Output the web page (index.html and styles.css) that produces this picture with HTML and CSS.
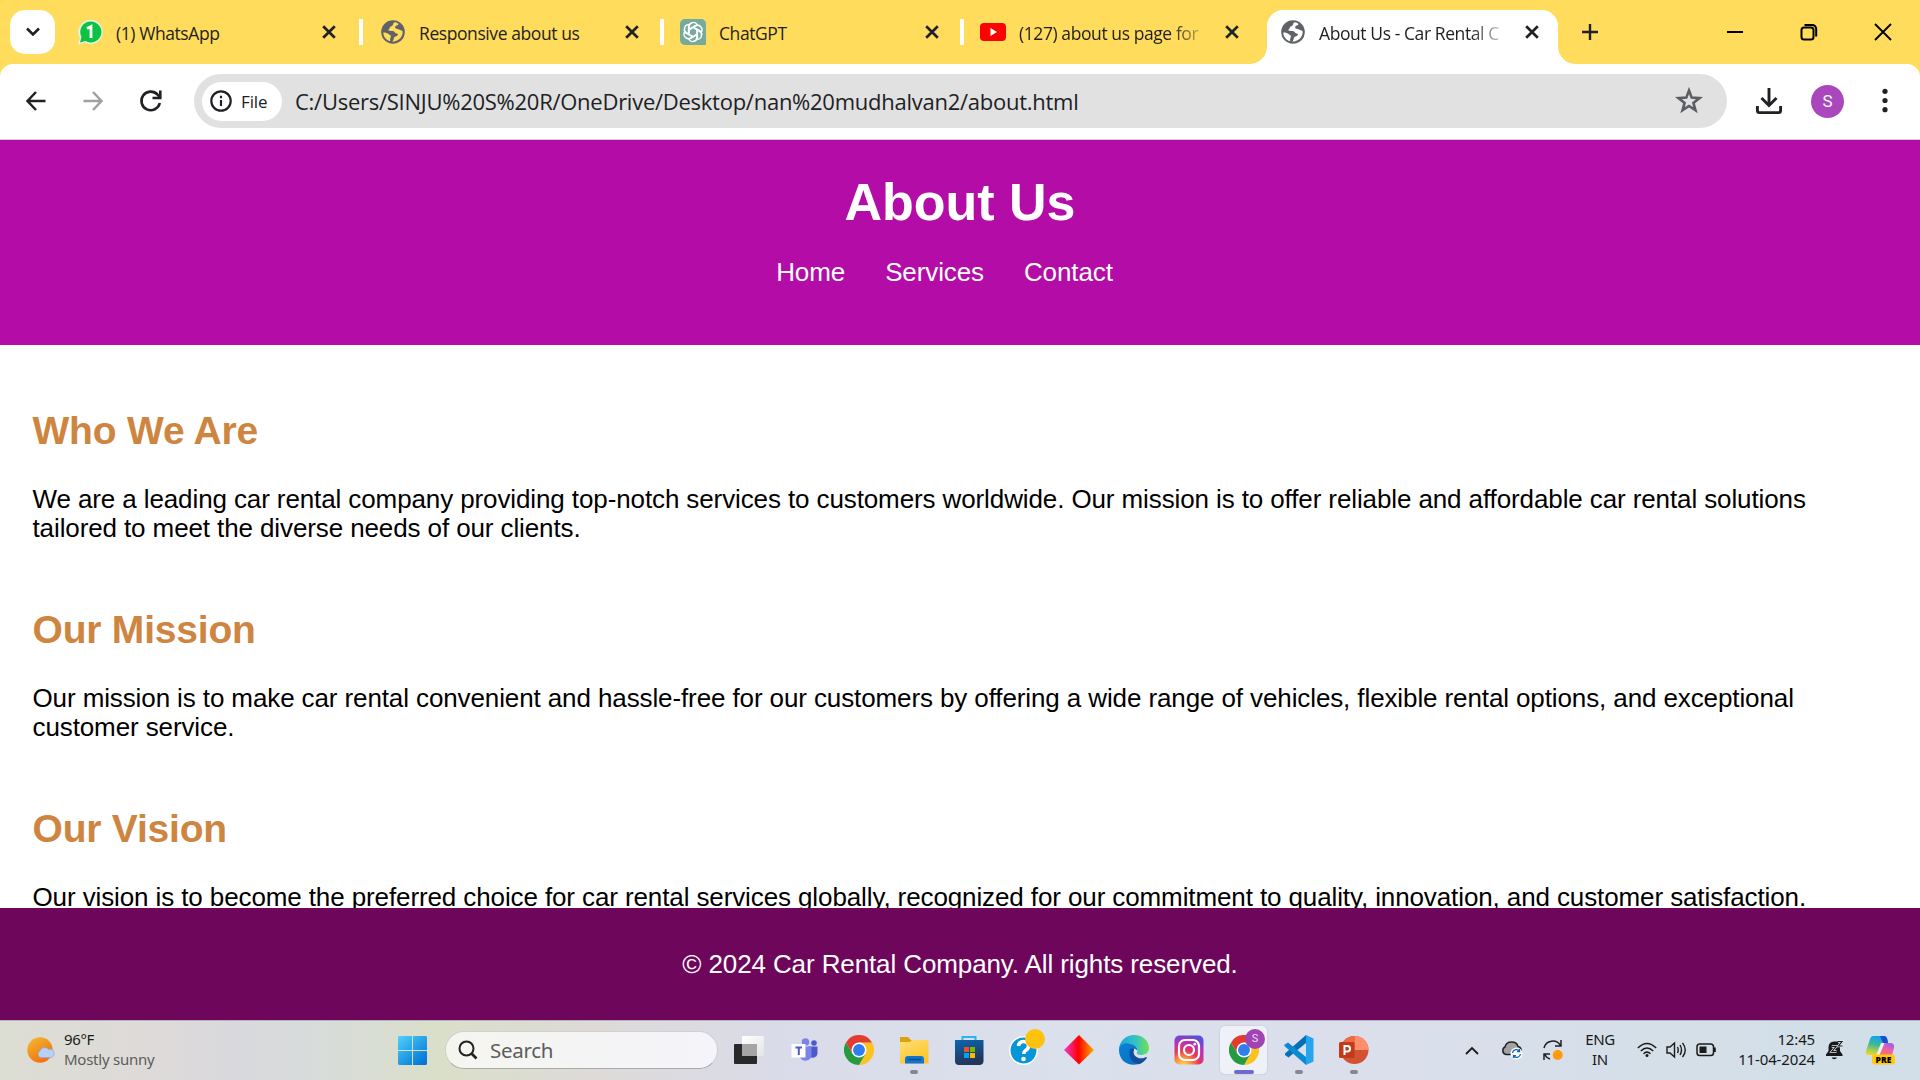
FILE: index.html
```html
<!DOCTYPE html>
<html lang="en">
<head>
<meta charset="utf-8">
<title>About Us - Car Rental Company</title>
<link rel="stylesheet" href="styles.css">
</head>
<body>
<svg class="defs" width="0" height="0" aria-hidden="true">
  <symbol id="close" viewBox="0 0 16 16"><path d="M2.2 2.2l11.6 11.6M13.8 2.2L2.2 13.8" stroke="#202124" stroke-width="2.7" fill="none"/></symbol>
  <symbol id="globe" viewBox="0 0 24 24"><circle cx="12" cy="12" r="11.8" fill="#5f6368"/><path d="M14.500 2.300C11 2.500 13 5.500 10.500 6.200C8 7 9 9 7.500 9.600C6.500 10.200 8.500 11.300 11 11C14 10.700 13.600 13.400 16 13.500C18 13.700 16.500 16.200 14.500 16.500C12 17 13.500 20 11 21.600C17 21.800 21.500 17.500 21.700 12C21.600 10 19.500 10.500 18 9.500C16.500 8.300 14 9.200 14.200 7.200C14.400 5.200 17.200 5.800 17.500 4C16.500 3 15.500 2.500 14.500 2.300zM2.300 12.500C4 12.500 6 12.800 7.300 13.700C8.300 15 10.500 15 9.800 17C9.300 18.600 8.800 19.600 9.200 21.200C5 20.200 2.300 16.500 2.300 12.500z" fill="var(--cut)"/></symbol>
  <symbol id="chrome" viewBox="0 0 48 48"><path d="M24 12H44.800A24 24 0 0 1 24 48L34.400 30z" fill="#fcc31e"/><path d="M3.200 12A24 24 0 0 0 24 48L34.400 30L24 34L13.600 30z" fill="#249a42"/><path d="M3.200 12A24 24 0 0 1 44.800 12H24L13.600 30z" fill="#e33b2e"/><circle cx="24" cy="24" r="12" fill="#fff"/><circle cx="24" cy="24" r="9.500" fill="#2f7df0"/></symbol>
</svg>
<div class="screen">
  <div class="tabstrip">
    <button class="tab-search"><svg width="16" height="12" viewBox="0 0 16 12"><path d="M2 2.500L8 8.500L14 2.500" fill="none" stroke="#202124" stroke-width="2.600"/></svg></button>
    <div class="tab first">
      <svg class="favicon" viewBox="0 0 26 26"><path d="M14 1A12 12 0 1 1 8 23.500L1 25.500L3 19A12 12 0 0 1 14 1z" fill="#dff7e7"/><path d="M14 2.500A10.500 10.500 0 1 1 8.500 22L3 23.500L4.500 18A10.500 10.500 0 0 1 14 2.500z" fill="#0cc143"/><path d="M10 9.500L14 7.500V19" fill="none" stroke="#fff" stroke-width="2.800"/></svg>
      <span class="tab-title">(1) WhatsApp</span><svg class="x"><use href="#close"/></svg>
    </div>
    <div class="tab second">
      <svg class="favicon globe"><use href="#globe"/></svg>
      <span class="tab-title">Responsive about us</span><svg class="x"><use href="#close"/></svg>
    </div>
    <div class="tab">
      <svg class="favicon" viewBox="0 0 26 26"><path d="M5 0H21A5 5 0 0 1 26 5V26H5A5 5 0 0 1 0 21V5A5 5 0 0 1 5 0z" fill="#75aa9c"/><g fill="none" stroke="#fff" stroke-width="1.300" transform="translate(13 13)"><path id="p" d="M-3.800 1.800V-5.500A4.300 4.300 0 0 1 4 -7.700M-3.800 -3L2.600 -6.700A4 4 0 0 1 7.500 -5"/><use href="#p" transform="rotate(60)"/><use href="#p" transform="rotate(120)"/><use href="#p" transform="rotate(180)"/><use href="#p" transform="rotate(240)"/><use href="#p" transform="rotate(300)"/></g></svg>
      <span class="tab-title">ChatGPT</span><svg class="x"><use href="#close"/></svg>
    </div>
    <div class="tab last">
      <svg class="favicon" viewBox="0 0 26 26"><rect y="4" width="26" height="18" rx="4" fill="#f00"/><path d="M10.500 9L17 13L10.500 17z" fill="#fff"/></svg>
      <span class="tab-title fade">(127) about us page for</span><svg class="x"><use href="#close"/></svg>
    </div>
    <div class="tab active">
      <svg class="favicon globe"><use href="#globe"/></svg>
      <span class="tab-title fade">About Us - Car Rental C</span><svg class="x"><use href="#close"/></svg>
    </div>
    <svg class="plus" width="18" height="18"><path d="M9 1V17M1 9H17" stroke="#202124" stroke-width="2.400"/></svg>
    <div class="window-controls">
      <svg width="18" height="18"><path d="M1 9H17" stroke="#000" stroke-width="2"/></svg>
      <svg width="18" height="18" fill="none" stroke="#000" stroke-width="2"><rect x="1.500" y="4.500" width="12" height="12" rx="2.500"/><path d="M4.500 2H12A4 4 0 0 1 16.200 6V13.500"/></svg>
      <svg width="18" height="18"><path d="M1 1L17 17M17 1L1 17" stroke="#000" stroke-width="1.800"/></svg>
    </div>
  </div>
  <div class="toolbar-back">
  <div class="toolbar">
    <div class="nav-buttons">
      <svg width="22" height="22" fill="none" stroke="#202124" stroke-width="2.500"><path d="M20.500 11H3M11 2L2.500 11L11 20"/></svg>
      <svg width="22" height="22" fill="none" stroke="#a0a0a0" stroke-width="2.500"><path d="M1.500 11H19M11 2L19.500 11L11 20"/></svg>
      <svg width="24" height="24" fill="none" stroke="#202124" stroke-width="2.600"><path d="M20.800 14A9.300 9.300 0 1 1 18.500 5.500L20.500 8"/><path d="M21.300 1.500V9H13.500" /></svg>
    </div>
    <div class="omnibox">
      <div class="chip"><svg width="22" height="22" fill="none" stroke="#202124" stroke-width="2.200"><circle cx="11" cy="11" r="9.700"/><path d="M11 10V16M11 5.700V8.200"/></svg><span>File</span></div>
      <span class="url">C:/Users/SINJU%20S%20R/OneDrive/Desktop/nan%20mudhalvan2/about.html</span>
      <svg class="star" width="28" height="28" viewBox="0 0 28 28"><path d="M14 3.500L16.700 10.600L24.500 11.100L18.400 15.900L20.500 23.200L14 19L7.500 23.200L9.600 15.900L3.500 11.100L11.300 10.600z" fill="none" stroke="#5b5e62" stroke-width="2.600"/></svg>
    </div>
    <svg class="download" width="28" height="28" fill="none" stroke="#202124" stroke-width="2.900"><path d="M14 1V18M6.500 11L14 18.500L21.500 11M2.400 19V23.500Q2.400 25.600 4.500 25.600H23.500Q25.600 25.600 25.600 23.500V19"/></svg>
    <div class="avatar">S</div>
    <svg class="dots" width="6" height="26" fill="#202124"><circle cx="3" cy="3.300" r="2.600"/><circle cx="3" cy="12.500" r="2.600"/><circle cx="3" cy="21.700" r="2.600"/></svg>
  </div>
  </div>

  <div class="page">
    <header class="hero">
      <h1>About Us</h1>
      <nav><a>Home</a><a>Services</a><a>Contact</a></nav>
    </header>
    <main>
      <section><h2>Who We Are</h2><p>We are a leading car rental company providing top-notch services to customers worldwide. Our mission is to offer reliable and affordable car rental solutions tailored to meet the diverse needs of our clients.</p></section>
      <section><h2>Our Mission</h2><p>Our mission is to make car rental convenient and hassle-free for our customers by offering a wide range of vehicles, flexible rental options, and exceptional customer service.</p></section>
      <section><h2>Our Vision</h2><p>Our vision is to become the preferred choice for car rental services globally, recognized for our commitment to quality, innovation, and customer satisfaction.</p></section>
    </main>
    <footer>© 2024 Car Rental Company. All rights reserved.</footer>
  </div>

  <div class="taskbar">
    <div class="weather">
      <svg width="30" height="28"><defs><linearGradient id="sun" x1="0" y1="0" x2=".6" y2="1"><stop offset="0" stop-color="#f0bd35"/><stop offset="1" stop-color="#f3700f"/></linearGradient></defs><circle cx="14" cy="14" r="12.700" fill="url(#sun)"/><path d="M14 21.500A4 4 0 0 1 14 14.800A5 5 0 0 1 22.500 13.500A4.200 4.200 0 0 1 25.500 21.500z" fill="#b9d0f5" stroke="#8fabe0" stroke-width=".8"/></svg>
      <div class="weather-text"><span class="temp">96°F</span><span class="cond">Mostly sunny</span></div>
    </div>
    <svg class="start" width="29" height="29"><defs><linearGradient id="win" gradientUnits="userSpaceOnUse" x1="0" y1="0" x2="24" y2="28"><stop offset="0" stop-color="#4fd2fc"/><stop offset="1" stop-color="#0376d6"/></linearGradient></defs><path d="M1 0H14V14H0V1zM15 0H28L29 1V14H15zM0 15H14V29H1L0 28zM15 15H29V28L28 29H15z" fill="url(#win)"/></svg>
    <div class="search"><svg width="20" height="20" fill="none" stroke="#222" stroke-width="2"><circle cx="8.500" cy="8.500" r="7"/><path d="M13 13L18.500 18.500" stroke-width="2.600"/></svg><span>Search</span></div>
    <div class="apps">
      <div class="app"><svg width="30" height="30"><defs><linearGradient id="tv" x2="1" y2="1"><stop stop-color="#fff"/><stop offset="1" stop-color="#e4e4e4"/></linearGradient></defs><rect y="9" width="23" height="20" rx="1" fill="#292929"/><rect x="8" y="1" width="22" height="20" rx="1" fill="url(#tv)"/><path d="M8 9H23V21H8z" fill="#a5a5a5"/></svg></div>
      <div class="app"><svg width="30" height="30"><circle cx="16.500" cy="7" r="3.800" fill="#7b83eb"/><circle cx="25" cy="8" r="2.800" fill="#5059c9"/><path d="M19 11.500H28.500V18A5 5 0 0 1 19 20z" fill="#5059c9"/><path d="M11 11.500H22.500V20A6 6 0 0 1 11 22z" fill="#7b83eb"/><rect x="2.500" y="9" width="14" height="13.500" fill="#fff"/><path d="M6.500 12.500H13M9.800 12.500V20" stroke="#5059c9" stroke-width="2"/></svg></div>
      <div class="app"><svg width="30" height="30"><use href="#chrome"/></svg></div>
      <div class="app run"><svg width="30" height="30"><defs><linearGradient id="fold" x2=".6" y2="1"><stop stop-color="#ffdf78"/><stop offset="1" stop-color="#fdc528"/></linearGradient></defs><path d="M1 2H9L12 5H13V10H1z" fill="#dda10c" /><path d="M1 7L11 7L13 5H28L29.500 6.500V28.500H1z" fill="url(#fold)"/><path d="M6 28.500V24A3 3 0 0 1 9 21H22A3 3 0 0 1 25 24V28.500z" fill="#1473cb"/><path d="M9 24.500H22" stroke="#07529a" stroke-width="1.500"/></svg></div>
      <div class="app"><svg width="30" height="30"><defs><linearGradient id="bag" x2=".3" y2="1"><stop stop-color="#0c65b2"/><stop offset="1" stop-color="#233559"/></linearGradient></defs><path d="M8.500 7V2H21.500V7" fill="none" stroke="#29b6f0" stroke-width="2"/><path d="M1 5H29.500V26A4 4 0 0 1 26 30H5A4 4 0 0 1 1 26z" fill="url(#bag)"/><path d="M10 12H15V17H10z" fill="#f25022"/><path d="M16 12H21V17H16z" fill="#7fba00"/><path d="M10 18H15V23H10z" fill="#00a4ef"/><path d="M16 18H21V23H16z" fill="#ffb900"/></svg></div>
      <div class="app"><svg width="30" height="30"><circle cx="14.500" cy="15.500" r="13.700" fill="#0696d7" stroke="#fff" stroke-width="1.500"/><path d="M9.500 11Q10 6.500 14.500 6.500Q19.500 6.500 19.500 11Q19.500 14 16.500 15.500Q14.800 16.500 14.800 19" fill="none" stroke="#fff" stroke-width="3.600"/><circle cx="14.500" cy="24" r="2.300" fill="#fff"/></svg><i class="badge"></i></div>
      <div class="app"><svg width="30" height="30"><defs><linearGradient id="dia"><stop stop-color="#f03ad0"/><stop offset=".48" stop-color="#f00"/><stop offset="1" stop-color="#ffae00"/></linearGradient></defs><path d="M15 0L30 15L15 29.500L0 15z" fill="url(#dia)"/></svg></div>
      <div class="app"><svg width="30" height="30"><defs><linearGradient id="e1"><stop stop-color="#20a4df"/><stop offset=".55" stop-color="#32c3c4"/><stop offset="1" stop-color="#70e150"/></linearGradient><linearGradient id="e2" y2="1"><stop stop-color="#0785d5"/><stop offset="1" stop-color="#0b6bc7"/></linearGradient></defs><path d="M0 14A15 15 0 0 1 15 0C24 0 30 6 30 13C30 18 26 20 22 20C18 20 17 18 18.500 16C19 13 17 11 12 9C7 8 2 10 0 14z" fill="url(#e1)"/><path d="M0 15C0 10 5 7.500 10 8.500C16 9.500 19 13 18.300 15.500C15 12 12 14 12 19C12 24 15 28 20 29C8 32 0 25 0 15z" fill="url(#e2)"/><path d="M11 14C9 19 11 28 20 29.200Q25 27.500 28 22.700Q27.500 21.500 26 22.500C19 25.500 13 20 15 15Q16 12 11 14z" fill="#114f9d"/></svg></div>
      <div class="app"><svg width="30" height="30"><defs><radialGradient id="ig" cx=".3" cy="1.050" r="1.100"><stop stop-color="#ffda63"/><stop offset=".25" stop-color="#fb9739"/><stop offset=".5" stop-color="#e73660"/><stop offset=".75" stop-color="#b92fbd"/><stop offset="1" stop-color="#5751d5"/></radialGradient></defs><rect x=".5" y=".5" width="29" height="29" rx="5" fill="url(#ig)"/><g fill="none" stroke="#fff" stroke-width="2.200"><rect x="5" y="5" width="20" height="20" rx="6"/><circle cx="15" cy="15" r="5"/></g><circle cx="20.800" cy="9.200" r="1.400" fill="#fff"/></svg></div>
      <div class="app current"><svg width="30" height="30"><use href="#chrome"/></svg><i class="badge profile">S</i></div>
      <div class="app run"><svg width="30" height="30"><path d="M22 0L29.500 3.500V26.500L22 30z" fill="#26a5ee"/><path d="M22 0V8L4.500 22.500L1 20V18.500z" fill="#0571b5"/><path d="M0 10L4 7.500L22 22V30L1 11.500z" fill="#0b8ad3"/></svg></div>
      <div class="app run"><svg width="30" height="30"><circle cx="15.500" cy="15" r="14" fill="#d35230"/><path d="M15.500 1A14 14 0 0 1 29.500 15H15.500z" fill="#ff8f6b"/><path d="M15.500 1A14 14 0 0 0 1.500 15H15.500z" fill="#ed6c47"/><rect x="0" y="7" width="15.500" height="16" rx="1.500" fill="#c13b1b"/><path d="M5.500 20V11H8.300A2.600 2.600 0 0 1 8.300 16.500H6" fill="none" stroke="#fff" stroke-width="2"/></svg></div>
    </div>
    <div class="tray">
      <svg class="chev" width="14" height="9"><path d="M1 8L7 2L13 8" fill="none" stroke="#1b1b1b" stroke-width="1.800"/></svg>
      <svg class="cloud" width="22" height="20"><path d="M5 14.500A4 4 0 0 1 4 7Q5 2 10.500 2Q16 2 17 6.500Q21 7.500 20 12L15 14.500z" fill="#a2a2a2" stroke="#222" stroke-width="1.500"/><circle cx="15.500" cy="13.500" r="6" fill="#fff"/><path d="M11.500 13A4 4 0 0 1 18.500 11V9M18.500 11.500H16M19.500 14A4 4 0 0 1 12.500 16V18M12.500 15.700H15" fill="none" stroke="#1167b8" stroke-width="1.300"/></svg>
      <svg class="sync" width="22" height="22"><path d="M2 9A9 9 0 0 1 18.500 6.500M19 1V7H13M8 20A9 9 0 0 1 2.500 15M2 21V15H8" fill="none" stroke="#222" stroke-width="1.500"/><circle cx="15.700" cy="16" r="5" fill="#ff9a0a"/></svg>
      <div class="lang"><span>ENG</span><span>IN</span></div>
      <svg class="wifi" width="20" height="16" fill="none" stroke="#1b1b1b" stroke-width="1.500"><path d="M.8 6Q10-3 19.200 6M3.800 9Q10 3 16.200 9M6.500 11.800Q10 8.500 13.500 11.800"/><circle cx="10" cy="13.500" r="1.500" fill="#1b1b1b" stroke="none"/></svg>
      <svg class="sound" width="21" height="18" fill="none" stroke="#1b1b1b" stroke-width="1.400"><path d="M1 6H4L8.500 2V16L4 12H1zM11.500 6Q13 9 11.500 12M14 4Q17 9 14 14M16.500 1.800Q22 9 16.500 16.200"/></svg>
      <svg class="battery" width="21" height="14"><rect x="1" y="1" width="16.500" height="11.500" rx="2.800" fill="none" stroke="#1b1b1b" stroke-width="1.500"/><rect x="3.500" y="3.500" width="7" height="6.500" fill="#1b1b1b"/><path d="M18.800 4.500V9" stroke="#1b1b1b" stroke-width="2"/></svg>
      <div class="clock"><span>12:45</span><span>11-04-2024</span></div>
      <svg class="bell" width="18" height="20"><path d="M0 14.500L2.500 11V7A6 6 0 0 1 8 1.500H14V11L16.500 14.500V16H0zM5.500 17.500H11A3 3 0 0 1 5.500 17.500z" fill="#17191b"/><path d="M5.800 6.500H10L6 11.500H10.500M12 1.500H16L12.500 6H16.500" fill="none" stroke="#e5edf2" stroke-width="2.600"/><path d="M5.800 6.500H10L6 11.500H10.500M12 1.500H16L12.500 6H16.500" fill="none" stroke="#17191b" stroke-width="1.200"/></svg>
      <svg class="copilot" width="30" height="30"><defs><linearGradient id="c1" x1=".3" x2=".1" y2="1"><stop stop-color="#16a3e8"/><stop offset=".4" stop-color="#38b99d"/><stop offset=".8" stop-color="#bdd23c"/><stop offset="1" stop-color="#ffd21d"/></linearGradient><linearGradient id="c2" x1=".8" x2=".2" y2="1"><stop stop-color="#9a60e8"/><stop offset=".5" stop-color="#ee61a7"/><stop offset="1" stop-color="#ff7a50"/></linearGradient></defs><path d="M8 1H19Q21.500 1 22.500 5L23 8H16L11 20H4Q0 20 1 16L5 4Q6 1 8 1z" fill="url(#c1)"/><path d="M15 1H19Q21.500 1 22.500 5L23 8H18z" fill="#1c4fcf"/><path d="M19 8H25Q30 8 29 13L27 20H12L16 11Q17 8 19 8z" fill="url(#c2)"/><path d="M17.500 8H19.500L14.500 20H11.500L15.500 10.500Q16 8.500 17.500 8z" fill="#eef3f8"/><rect x="7" y="19.500" width="23" height="10" rx="3" fill="#ffca10"/><text x="18.500" y="27.700" text-anchor="middle" font-family="Open Sans, sans-serif" font-size="8.500" font-weight="800">PRE</text></svg>
    </div>
  </div>
</div>
</body>
</html>
```
FILE: styles.css
```css
* { box-sizing: border-box; }
body { margin: 0; overflow: hidden; font-family: "Liberation Sans", Arial, sans-serif; }
svg { display: block; flex: none; }
.defs { position: absolute; }
.screen { width: 1920px; height: 1080px; display: flex; flex-direction: column; overflow: hidden; background: #fff; }

/* tab strip */
.tabstrip { height: 64px; background: #ffdc5c; display: flex; align-items: center; padding-left: 10px; font-family: "Open Sans", "Noto Sans", sans-serif; color: #1f1f1f; flex: none; }
.tab-search { width: 45px; height: 44px; margin-right: 5px; border: 0; border-radius: 15px; background: #fff; display: flex; align-items: center; justify-content: center; padding: 0; }
.tab { width: 300px; height: 26px; display: flex; align-items: center; padding-left: 16px; border-right: 4px solid #fff; flex: none; }
.tab.first { width: 303px; padding-left: 17px; }
.tab.second { width: 301px; padding-left: 17px; }
.tab.last { border-color: transparent; }
.favicon { width: 26px; height: 26px; margin-right: 13px; }
.favicon.globe { --cut: #ffdc5c; padding: 1px; }
.tab-title { width: 185px; margin-right: 20px; padding-top: 1px; font-size: 17.5px; letter-spacing: -.42px; white-space: nowrap; overflow: hidden; line-height: 26px; }
.fade { -webkit-mask-image: linear-gradient(90deg, #000 82%, transparent 103%); mask-image: linear-gradient(90deg, #000 82%, transparent 103%); }
.x { width: 16px; height: 16px; }
.tab.active { width: 291px; height: 54px; margin: 10px 0 0 3px; padding: 0 0 10px 13px; background: #fff; border: 0; border-radius: 16px 16px 0 0; position: relative; }
.tab.active .globe { --cut: #fff; }
.tab.active::before, .tab.active::after { content: ""; position: absolute; bottom: 0; width: 17px; height: 17px; }
.tab.active::before { left: -17px; background: radial-gradient(circle at 0 0, transparent 16.5px, #fff 17px); }
.tab.active::after { right: -17px; background: radial-gradient(circle at 100% 0, transparent 16.5px, #fff 17px); }
.plus { margin-left: 23px; }
.window-controls { margin-left: auto; display: flex; gap: 56px; padding-right: 28px; }

/* toolbar */
.toolbar-back { background: #ffdc5c; height: 76px; flex: none; }
.toolbar { height: 76px; background: #fff; border-radius: 13px 13px 0 0; border-bottom: 1px solid #cfd1d1; display: flex; align-items: center; padding: 0 32px 1px 25px; font-family: "Open Sans", "Noto Sans", sans-serif; }
.nav-buttons { display: flex; align-items: center; gap: 35px; width: 169px; }
.omnibox { width: 1533px; height: 54px; border-radius: 27px; background: #e1e1e1; display: flex; align-items: center; padding: 0 24px 0 8px; color: #202124; }
.chip { width: 80px; height: 39px; border-radius: 20px; background: #fff; display: flex; align-items: center; padding-left: 8px; gap: 9px; font-size: 17px; font-weight: 500; letter-spacing: -.1px; }
.url { margin-left: 13px; font-size: 22px; letter-spacing: -.26px; white-space: nowrap; }
.star { margin-left: auto; }
.download { margin-left: 28px; }
.avatar { width: 33px; height: 33px; border-radius: 50%; margin-left: 28px; background: #ab47bc; color: #fff; font: 17px/33px Roboto, sans-serif; text-align: center; }
.dots { margin-left: auto; }

/* web page */
.page { height: 880px; flex: none; display: flex; flex-direction: column; font-size: 26px; line-height: 29px; letter-spacing: -.11px; }
.hero { height: 205px; flex: none; background: #b40ca7; color: #fff; text-align: center; padding-top: 32px; }
.hero h1 { margin: 0; font-size: 52px; line-height: 60px; letter-spacing: 0; }
.hero nav { display: flex; justify-content: center; gap: 40px; margin: 26px 31px 0 0; }
main { height: 563px; overflow: hidden; padding: 31px 32.5px 0; }
section { height: 199px; padding-top: 32px; }
h2 { margin: 0; font-size: 39px; line-height: 45px; color: #cd853f; letter-spacing: -.2px; }
p { margin: 32px 0 0; color: #000; }
footer { flex: 1; background: #6e075b; color: #fff; display: flex; align-items: center; justify-content: center; }

/* taskbar */
.taskbar { height: 60px; flex: none; display: flex; align-items: center; padding-bottom: 1px; border-top: 1px solid #b9b3bb; background: linear-gradient(90deg, #dcddd3 0, #dedad9 8%, #d9d9dd 12%, #d8dcda 17%, #dadfc9 23%, #dddad8 31%, #dadbe8 40%, #dae0ec 55%, #dadfeb 72%, #d4dfe8 88%, #d2dfe8 100%); font-family: "Noto Sans", "Open Sans", sans-serif; color: #1a1a1a; }
.weather { display: flex; align-items: center; width: 398px; padding-left: 26px; gap: 8px; }
.weather-text, .lang, .clock { display: flex; flex-direction: column; font-size: 15px; line-height: 20px; letter-spacing: -.35px; padding-bottom: 2px; }
.cond { color: #5c5c5c; letter-spacing: -.25px; }
.search { width: 273px; height: 38px; margin-left: 18px; border-radius: 19px; background: linear-gradient(90deg, #f5f5f0, #f4f4fa); border: 1px solid #d0d0cf; border-bottom-color: #aaa; display: flex; align-items: center; padding-left: 12px; gap: 12px; font-size: 20.5px; color: #5c5c5c; letter-spacing: -.3px; }
.apps { display: flex; margin-left: 3px; }
.app { width: 55px; height: 48px; display: flex; align-items: center; justify-content: center; position: relative; }
.app.current { width: 47px; margin: 0 4px; border-radius: 5px; background: #eef1f8; box-shadow: 0 0 1px 1px #cfd4df; }
.run::after, .current::after { content: ""; position: absolute; bottom: 0; width: 8px; height: 4px; border-radius: 2px; background: #858890; }
.current::after { width: 20px; background: #6c69d1; }
.badge { position: absolute; border-radius: 50%; width: 20px; height: 20px; right: 6px; top: 3px; background: #ffc20e; }
.profile { right: 2px; background: #a043b3; color: #f0d8f5; font: 11px/20px Roboto, sans-serif; text-align: center; }
.tray { flex: 1; display: flex; align-items: center; justify-content: flex-end; padding-right: 25px; }
.cloud { margin-left: 22px; }
.sync { margin-left: 19px; }
.lang { margin-left: 21px; text-align: center; width: 30px; }
.wifi { margin-left: 22px; }
.sound { margin-left: 9px; }
.battery { margin-left: 9px; }
.clock { width: 82px; text-align: right; margin-left: 16px; letter-spacing: -.15px; }
.bell { margin-left: 11px; }
.copilot { margin-left: 21px; }
```
